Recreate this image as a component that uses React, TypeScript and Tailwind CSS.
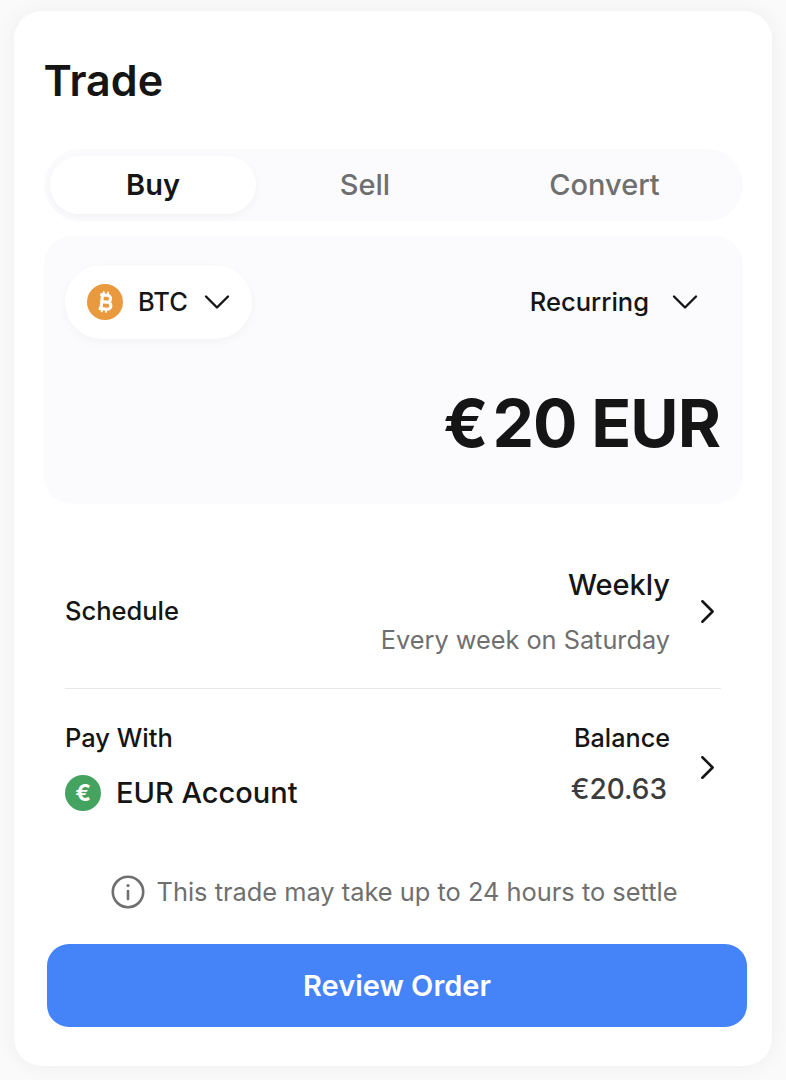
import { ChevronDown, ChevronRight } from "lucide-react";

function BitcoinIcon() {
  return (
    <div className="flex h-[36px] w-[36px] shrink-0 items-center justify-center rounded-full bg-[#ea9a3e]">
      <svg width="30" height="30" viewBox="0 0 24 24" fill="none" stroke="#fff">
        <g transform="rotate(6 12 12)">
          <path d="M7.6 6.4h5.8a2.8 2.8 0 0 1 0 5.6H9.5h4.7a2.8 2.8 0 0 1 0 5.6H7.6M9.4 6.4v11.2" strokeWidth="2.5" />
          <path d="M10.2 3.6v2.4M13.6 3.6v2.4M10.2 18v2.4M13.6 18v2.4" strokeWidth="1.5" />
        </g>
      </svg>
    </div>
  );
}

function EuroIcon() {
  return (
    <div className="flex h-[36px] w-[36px] shrink-0 items-center justify-center rounded-full bg-[#44a35f]">
      <span className="text-[23px] leading-none font-bold text-white">€</span>
    </div>
  );
}

export default function App() {
  return (
    <div className="h-[1080px] w-[786px] overflow-hidden bg-[#fafafa] pt-[11px] pl-[14px] font-['Inter',sans-serif] text-[#151515]">
      <div className="flex h-[1055px] w-[758px] flex-col rounded-[28px] bg-white pt-[40px] pr-[25px] pl-[30px] shadow-[0_0_22px_rgba(0,0,0,0.05)]">
        <h1 className="ml-[-0.5px] h-[58px] text-[43px] leading-[58px] font-semibold">Trade</h1>

        <div className="mt-[40px] mr-[4px] flex h-[72px] items-center rounded-full bg-[#fbfbfd] pl-[6px] text-[29px] font-medium text-[#6f6f6f]">
          <div className="flex h-[58px] w-[206px] items-center justify-center rounded-full bg-white font-semibold text-[#151515] shadow-[0_3px_10px_rgba(0,0,0,0.04)]">
            Buy
          </div>
          <div className="w-[218px] text-center">Sell</div>
          <div className="w-[261px] text-center">Convert</div>
        </div>

        <div className="mt-[15px] mr-[4px] h-[268px] rounded-[28px] bg-[#fbfbfd] px-[21px] pt-[29px]">
          <div className="flex items-center justify-between">
            <div className="flex h-[74px] w-[187px] items-center rounded-full bg-white pl-[22px] shadow-[0_3px_10px_rgba(0,0,0,0.035)]">
              <BitcoinIcon />
              <span className="ml-[15px] text-[25.5px] font-medium">BTC</span>
              <ChevronDown size={44} strokeWidth={1.3} className="ml-[7px] shrink-0" />
            </div>
            <div className="flex items-center pr-[15px]">
              <span className="text-[25.5px] font-medium">Recurring</span>
              <ChevronDown size={44} strokeWidth={1.3} className="ml-[14px]" />
            </div>
          </div>
          <div className="mt-[44px] flex justify-end pr-[2px] text-[66px] leading-[80px] font-bold tracking-[-1px]">
            <span>€</span>
            <span className="ml-[5px]">20 EUR</span>
          </div>
        </div>

        <div className="mt-[62px] mr-[26px] ml-[21px] flex items-center justify-between border-b border-[#e8e8e8] pb-[31px]">
          <span className="text-[25.5px] font-medium">Schedule</span>
          <div className="flex items-center">
            <div className="text-right">
              <div className="text-[29px] leading-[38px] font-medium">Weekly</div>
              <div className="mt-[19px] text-[25.3px] leading-[34px] text-[#6f6f6f]">Every week on Saturday</div>
            </div>
            <ChevronRight size={41} strokeWidth={1.5} className="mr-[-7px] ml-[17px]" />
          </div>
        </div>

        <div className="mr-[26px] ml-[21px] flex items-center justify-between pt-[30px]">
          <div>
            <div className="text-[25.5px] leading-[38px] font-medium">Pay With</div>
            <div className="mt-[17px] flex items-center">
              <EuroIcon />
              <span className="ml-[15px] text-[29px] leading-[38px] font-medium">EUR Account</span>
            </div>
          </div>
          <div className="flex items-center">
            <div className="pb-[3px] text-right">
              <div className="text-[25.2px] leading-[38px] font-medium">Balance</div>
              <div className="mt-[12px] pr-[3px] text-[28px] leading-[40px] font-medium text-[#3c3c3c]">€20.63</div>
            </div>
            <ChevronRight size={41} strokeWidth={1.5} className="mt-[3px] mr-[-7px] ml-[17px]" />
          </div>
        </div>

        <div className="mt-[61px] mr-[4px] flex items-center justify-center text-[25.4px] text-[#6f6f6f]">
          <svg width="36" height="36" viewBox="0 0 36 36" fill="none" stroke="#6f6f6f" strokeWidth="2.6" className="mr-[11px]">
            <circle cx="18" cy="18" r="15.2" />
            <path d="M18 17v8" strokeLinecap="round" />
            <circle cx="18" cy="11.5" r="1.6" fill="#6f6f6f" stroke="none" />
          </svg>
          <span>This trade may take up to 24 hours to settle</span>
        </div>

        <button className="mt-[33px] ml-[3px] h-[83px] w-[700px] rounded-[22px] bg-[#4583f8] text-[29px] font-semibold text-white">
          Review Order
        </button>
      </div>
    </div>
  );
}
